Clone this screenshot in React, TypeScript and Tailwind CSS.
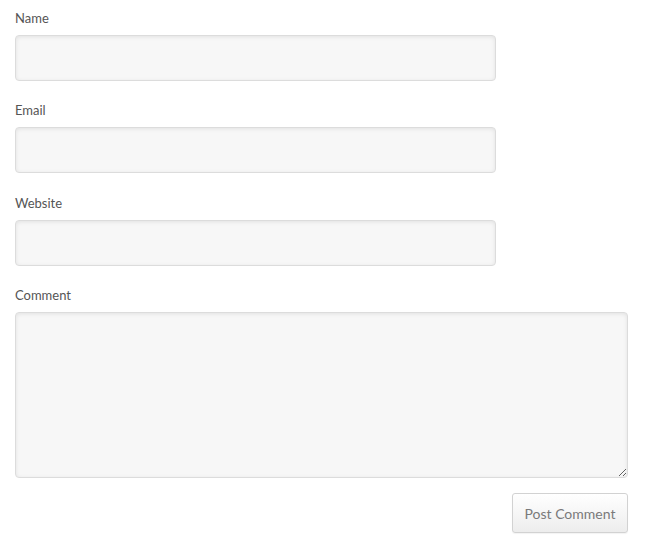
export default function App() {
  const fields = [
    { label: "Name", gap: "mb-[19px]" },
    { label: "Email", gap: "mb-[20px]" },
    { label: "Website", gap: "mb-[19px]" },
  ];

  return (
    <div className="w-[666px] h-[551px] bg-white px-[15px] pt-[8px] font-['Lato','Open_Sans',sans-serif] text-[#555]">
      <form className="w-[613px]">
        {fields.map((f) => (
          <div key={f.label} className={f.gap}>
            <label className="block text-[13px] leading-[20px] mb-[7px] text-[#555]">{f.label}</label>
            <input
              type="text"
              className="block w-[481px] h-[46px] rounded-[4px] border border-[#dcdcdc] bg-[#f7f7f7] shadow-[inset_0_1px_4px_rgba(0,0,0,0.09)] outline-none"
            />
          </div>
        ))}
        <div className="mb-[15px]">
          <label className="block text-[13px] leading-[20px] mb-[7px] text-[#555]">Comment</label>
          <textarea className="block w-[613px] h-[166px] rounded-[4px] border border-[#dcdcdc] bg-[#f7f7f7] shadow-[inset_0_1px_4px_rgba(0,0,0,0.09)] outline-none resize-y" />
        </div>
        <div className="flex justify-end">
          <button
            type="button"
            className="w-[116px] h-[40px] rounded-[3px] border border-[#d2d2d2] bg-gradient-to-b from-white to-[#ededed] text-[14px] text-[#7a7a7a] shadow-[0_1px_1px_rgba(0,0,0,0.05)]"
          >
            Post Comment
          </button>
        </div>
      </form>
    </div>
  );
}
